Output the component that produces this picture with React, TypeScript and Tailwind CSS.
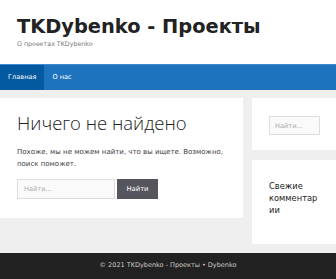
const navItems = [
  { label: 'Главная', active: true },
  { label: 'О нас', active: false },
]

export default function App() {
  return (
    <div className="w-[336px] h-[279px] overflow-hidden bg-[#efefef] font-['DejaVu_Sans',sans-serif] flex flex-col">
      {/* Header */}
      <header className="bg-white h-[64px] pl-[17px] pt-[15px] shrink-0">
        <h1 className="text-[19.4px] leading-[24px] font-bold text-[#222]">TKDybenko - Проекты</h1>
        <p className="text-[6.3px] leading-[9px] text-[#777]">О проектах TKDybenko</p>
      </header>

      {/* Nav */}
      <nav className="bg-[#1e73be] h-[26px] flex shrink-0 border-t border-[#3d8ad0]">
        {navItems.map((item) => (
          <a
            key={item.label}
            href="#"
            className={`text-white text-[6.6px] flex items-center px-[8px] ${item.active ? 'bg-[#035a9e]' : ''}`}
          >
            {item.label}
          </a>
        ))}
      </nav>

      {/* Content */}
      <div className="flex items-start gap-[9px] pt-[8px] flex-1 min-h-0">
        <main className="w-[243px] h-[120px] shrink-0 bg-white pl-[17px] pt-[12px]">
          <h2 className="font-['Open_Sans',sans-serif] font-light text-[18.5px] leading-[26px] text-[#222]">Ничего не найдено</h2>
          <p className="text-[7px] leading-[11.5px] text-[#3a3a3a] mt-[11px]">
            Похоже, мы не можем найти, что вы ищете. Возможно, поиск поможет.
          </p>
          <form className="flex mt-[9px]" onSubmit={(e) => e.preventDefault()}>
            <input
              placeholder="Найти..."
              className="block w-[98px] h-[20px] bg-[#fafafa] border border-[#ddd] text-[6.6px] px-[6px] placeholder:text-[#aaa] outline-none"
            />
            <button className="ml-[2px] w-[41px] h-[20px] bg-[#55555e] text-white text-[6.8px]">Найти</button>
          </form>
        </main>

        <aside className="flex-1 flex flex-col gap-[10px]">
          <div className="bg-white h-[52px] pl-[17px] pt-[18px]">
            <input
              placeholder="Найти..."
              className="block w-[51px] h-[19px] bg-[#fafafa] border border-[#ddd] text-[6.6px] px-[5px] placeholder:text-[#aaa] outline-none"
            />
          </div>
          <div className="bg-white h-[84px] pl-[17px] pt-[20px]">
            <h3 className="text-[8.3px] leading-[12px] font-normal text-[#222] w-[50px] [overflow-wrap:anywhere]">Свежие комментарии</h3>
          </div>
        </aside>
      </div>

      {/* Footer */}
      <footer className="bg-[#222222] h-[26px] shrink-0 flex items-center justify-center">
        <p className="text-[6.5px] text-[#ccc]">© 2021 TKDybenko - Проекты • Dybenko</p>
      </footer>
    </div>
  )
}
